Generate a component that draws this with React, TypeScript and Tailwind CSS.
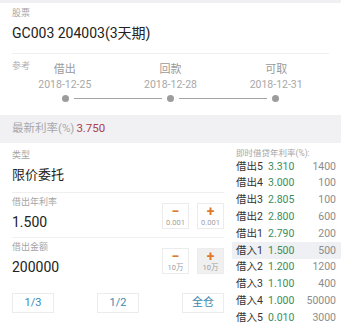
import React from "react";

const font = { fontFamily: '"Roboto", "Noto Sans CJK SC", sans-serif' };

interface BookRow {
  label: string;
  rate: string;
  volume: string;
  active?: boolean;
}

const book: BookRow[] = [
  { label: "借出5", rate: "3.310", volume: "1400" },
  { label: "借出4", rate: "3.000", volume: "100" },
  { label: "借出3", rate: "2.805", volume: "100" },
  { label: "借出2", rate: "2.800", volume: "600" },
  { label: "借出1", rate: "2.790", volume: "200" },
  { label: "借入1", rate: "1.500", volume: "500", active: true },
  { label: "借入2", rate: "1.200", volume: "1200" },
  { label: "借入3", rate: "1.100", volume: "400" },
  { label: "借入4", rate: "1.000", volume: "50000" },
  { label: "借入5", rate: "0.010", volume: "3000" },
];

const dates = [
  { name: "借出", date: "2018-12-25" },
  { name: "回款", date: "2018-12-28" },
  { name: "可取", date: "2018-12-31" },
];

const StepButton = ({ sign, step, muted }: { sign: string; step: string; muted?: boolean }) => (
  <div
    className={`w-[27px] h-[26px] border border-[#ececec] flex flex-col items-center justify-center ${
      muted ? "bg-[#f0f0f0]" : "bg-white"
    }`}
  >
    <span className="text-[14px] leading-[13px] font-bold text-[#e0792c]">{sign}</span>
    <span className="text-[7.5px] leading-[9px] text-[#a0a0a0]">{step}</span>
  </div>
);

const PriceField = ({
  label,
  value,
  step,
  mutedPlus,
  bordered,
}: {
  label: string;
  value: string;
  step: string;
  mutedPlus?: boolean;
  bordered?: boolean;
}) => (
  <div className={`h-[45px] flex ${bordered ? "border-b border-[#f0f0f0]" : ""}`}>
    <div className="flex-1">
      <div className="pt-[4px] text-[9px] leading-[10px] text-[#a6a6a6]">{label}</div>
      <div className="mt-[5px] text-[14px] leading-[20px] text-[#222]">{value}</div>
    </div>
    <div className="pt-[10px] flex gap-[8px]">
      <StepButton sign="−" step={step} />
      <StepButton sign="+" step={step} muted={mutedPlus} />
    </div>
  </div>
);

export default function App() {
  return (
    <div className="w-[341px] h-[325px] bg-white overflow-hidden" style={font}>
      <div className="h-[3px] bg-[#f0f0f2]" />

      <div className="px-3">
        <div className="pb-[10px] border-b border-[#efefef]">
          <div className="pt-[5px] text-[9px] leading-[10px] text-[#a6a6a6]">股票</div>
          <div className="mt-[5px] text-[14px] leading-[20px] text-[#222]">GC003 204003(3天期)</div>
        </div>

        <div className="pb-[13px]">
          <div className="mt-[7px] text-[9px] leading-[10px] text-[#b0b0b0]">参考</div>
          <div className="-mt-[8px] grid grid-cols-3">
            {dates.map((d) => (
              <div key={d.name} className="flex flex-col items-center">
                <span className="text-[11px] leading-[14px] text-[#9a9a9a]">{d.name}</span>
                <span className="mt-[1px] text-[10.5px] leading-[14px] text-[#a8a8a8]">{d.date}</span>
              </div>
            ))}
          </div>
          <div className="mt-[3px] px-[50px] flex items-center">
            <div className="w-[7px] h-[7px] rounded-full bg-[#9c9c9c]" />
            <div className="flex-1 mx-[5px] h-px bg-[#a4a4a4]" />
            <div className="w-[7px] h-[7px] rounded-full bg-[#9c9c9c]" />
            <div className="flex-1 mx-[5px] h-px bg-[#a4a4a4]" />
            <div className="w-[7px] h-[7px] rounded-full bg-[#9c9c9c]" />
          </div>
        </div>
      </div>

      <div className="h-[28px] bg-[#f1f1f4] px-3 flex items-center text-[11.5px]">
        <span className="text-[#a8a8ad]">最新利率(%)</span>
        <span className="ml-[2px] text-[#a9404c]">3.750</span>
      </div>

      <div className="flex">
        <div className="w-[226px] pl-3 pr-[2px]">
          <div className="pb-[7px] border-b border-[#efefef]">
            <div className="pt-[7px] text-[9px] leading-[10px] text-[#a6a6a6]">类型</div>
            <div className="mt-[5px] text-[13px] leading-[20px] text-[#222]">限价委托</div>
          </div>
          <PriceField label="借出年利率" value="1.500" step="0.001" bordered />
          <PriceField label="借出金额" value="200000" step="10万" mutedPlus />
          <div className="mt-[10px] flex justify-between">
            {["1/3", "1/2", "全仓"].map((t) => (
              <div
                key={t}
                className="w-[42px] h-[20px] border border-[#ececec] flex items-center justify-center text-[11px] text-[#3d88b0]"
              >
                {t}
              </div>
            ))}
          </div>
        </div>

        <div className="flex-1 pl-[6px]">
          <div className="pl-[4px] pt-[5px] text-[8.5px] leading-[10px] text-[#a6a6a6]">即时借贷年利率(%):</div>
          {book.map((r) => (
            <div
              key={r.label}
              className={`h-[16.8px] pl-[4px] pr-[5px] flex items-center text-[10.5px] ${
                r.active ? "bg-[#eef0f3]" : ""
              }`}
            >
              <span className="w-[32px] text-[#333]">{r.label}</span>
              <span className="flex-1 text-[#3b8d5c]">{r.rate}</span>
              <span className="text-[#8c8c8c]">{r.volume}</span>
            </div>
          ))}
        </div>
      </div>
    </div>
  );
}
